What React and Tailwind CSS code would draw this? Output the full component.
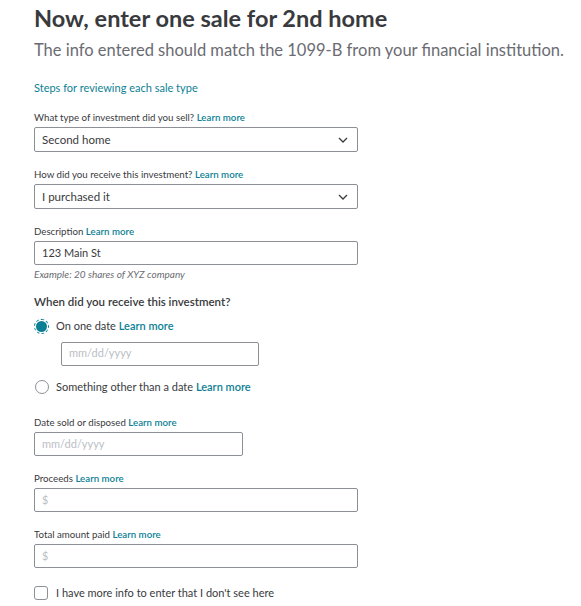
import React, { useState } from 'react';

const teal = 'text-[#0d7f94]';

function Label({ children }) {
  return (
    <div className="text-[9.7px] leading-[14px] text-[#393a3d]">
      {children} <span className={`${teal} font-semibold`}>Learn more</span>
    </div>
  );
}

function Chevron() {
  return (
    <svg width="10" height="6" viewBox="0 0 10 6" fill="none">
      <path d="M1 1l4 4 4-4" stroke="#393a3d" strokeWidth="1.3" />
    </svg>
  );
}

function SelectBox({ value }) {
  return (
    <div className="mt-[3px] flex h-[25px] w-[324px] items-center justify-between rounded-[2px] border border-[#8d9096] pl-[7px] pr-[9px] text-[11.5px] text-[#393a3d]">
      <span>{value}</span>
      <Chevron />
    </div>
  );
}

function TextBox({ width = 'w-[324px]', value, placeholder }) {
  return (
    <div className={`mt-[3px] flex h-[24px] ${width} items-center rounded-[2px] border border-[#8d9096] px-[7px] text-[11px]`}>
      {value ? (
        <span className="text-[#393a3d]">{value}</span>
      ) : (
        <span className="text-[#babec5]">{placeholder}</span>
      )}
    </div>
  );
}

function Radio({ checked }) {
  return (
    <span className="relative flex h-[15px] w-[15px] items-center justify-center">
      {checked ? (
        <>
          <span className="absolute inset-0 rounded-full border border-dashed border-[#0d7f94]" />
          <span className="h-[11px] w-[11px] rounded-full bg-[#0d7f94]" />
        </>
      ) : (
        <span className="h-[14px] w-[14px] rounded-full border border-[#8d9096]" />
      )}
    </span>
  );
}

export default function App() {
  const [more, setMore] = useState(false);

  return (
    <div className="min-h-screen bg-white pl-[34px] pt-[3px] font-['Lato',sans-serif] text-[#393a3d]">
      <h1 className="text-[23.5px] font-bold leading-[30px] text-[#393a3d]">
        Now, enter one sale for 2nd home
      </h1>
      <p className="mt-[5px] whitespace-nowrap text-[16.5px] leading-[24px] text-[#6b6c72]">
        The info entered should match the 1099-B from your financial institution.
      </p>

      <div className={`mt-[19px] text-[11px] leading-[14px] ${teal}`}>
        Steps for reviewing each sale type
      </div>

      <div className="mt-[15px]">
        <Label>What type of investment did you sell?</Label>
        <SelectBox value="Second home" />
      </div>

      <div className="mt-[15px]">
        <Label>How did you receive this investment?</Label>
        <SelectBox value="I purchased it" />
      </div>

      <div className="mt-[15px]">
        <Label>Description</Label>
        <TextBox value="123 Main St" />
        <div className="mt-[3px] text-[10px] italic leading-[12px] text-[#6b6c72]">
          Example: 20 shares of XYZ company
        </div>
      </div>

      <div className="mt-[14px] text-[11.5px] font-semibold leading-[16px] text-[#393a3d]">
        When did you receive this investment?
      </div>

      <div className="mt-[8px] flex items-center gap-[7px] text-[11px]">
        <Radio checked />
        <span>
          On one date <span className={`${teal} font-semibold`}>Learn more</span>
        </span>
      </div>
      <div className="ml-[27px] mt-[7px]">
        <TextBox width="w-[198px]" placeholder="mm/dd/yyyy" />
      </div>

      <div className="mt-[13px] flex items-center gap-[7px] text-[11px]">
        <Radio />
        <span>
          Something other than a date <span className={`${teal} font-semibold`}>Learn more</span>
        </span>
      </div>

      <div className="mt-[20px]">
        <Label>Date sold or disposed</Label>
        <TextBox width="w-[209px]" placeholder="mm/dd/yyyy" />
      </div>

      <div className="mt-[15px]">
        <Label>Proceeds</Label>
        <TextBox placeholder="$" />
      </div>

      <div className="mt-[15px]">
        <Label>Total amount paid</Label>
        <TextBox placeholder="$" />
      </div>

      <label className="mt-[17px] flex cursor-pointer items-center gap-[8px] text-[11px]">
        <span
          onClick={() => setMore(!more)}
          className="h-[14px] w-[14px] rounded-[3px] border border-[#8d9096]"
        />
        I have more info to enter that I don't see here
      </label>
    </div>
  );
}
